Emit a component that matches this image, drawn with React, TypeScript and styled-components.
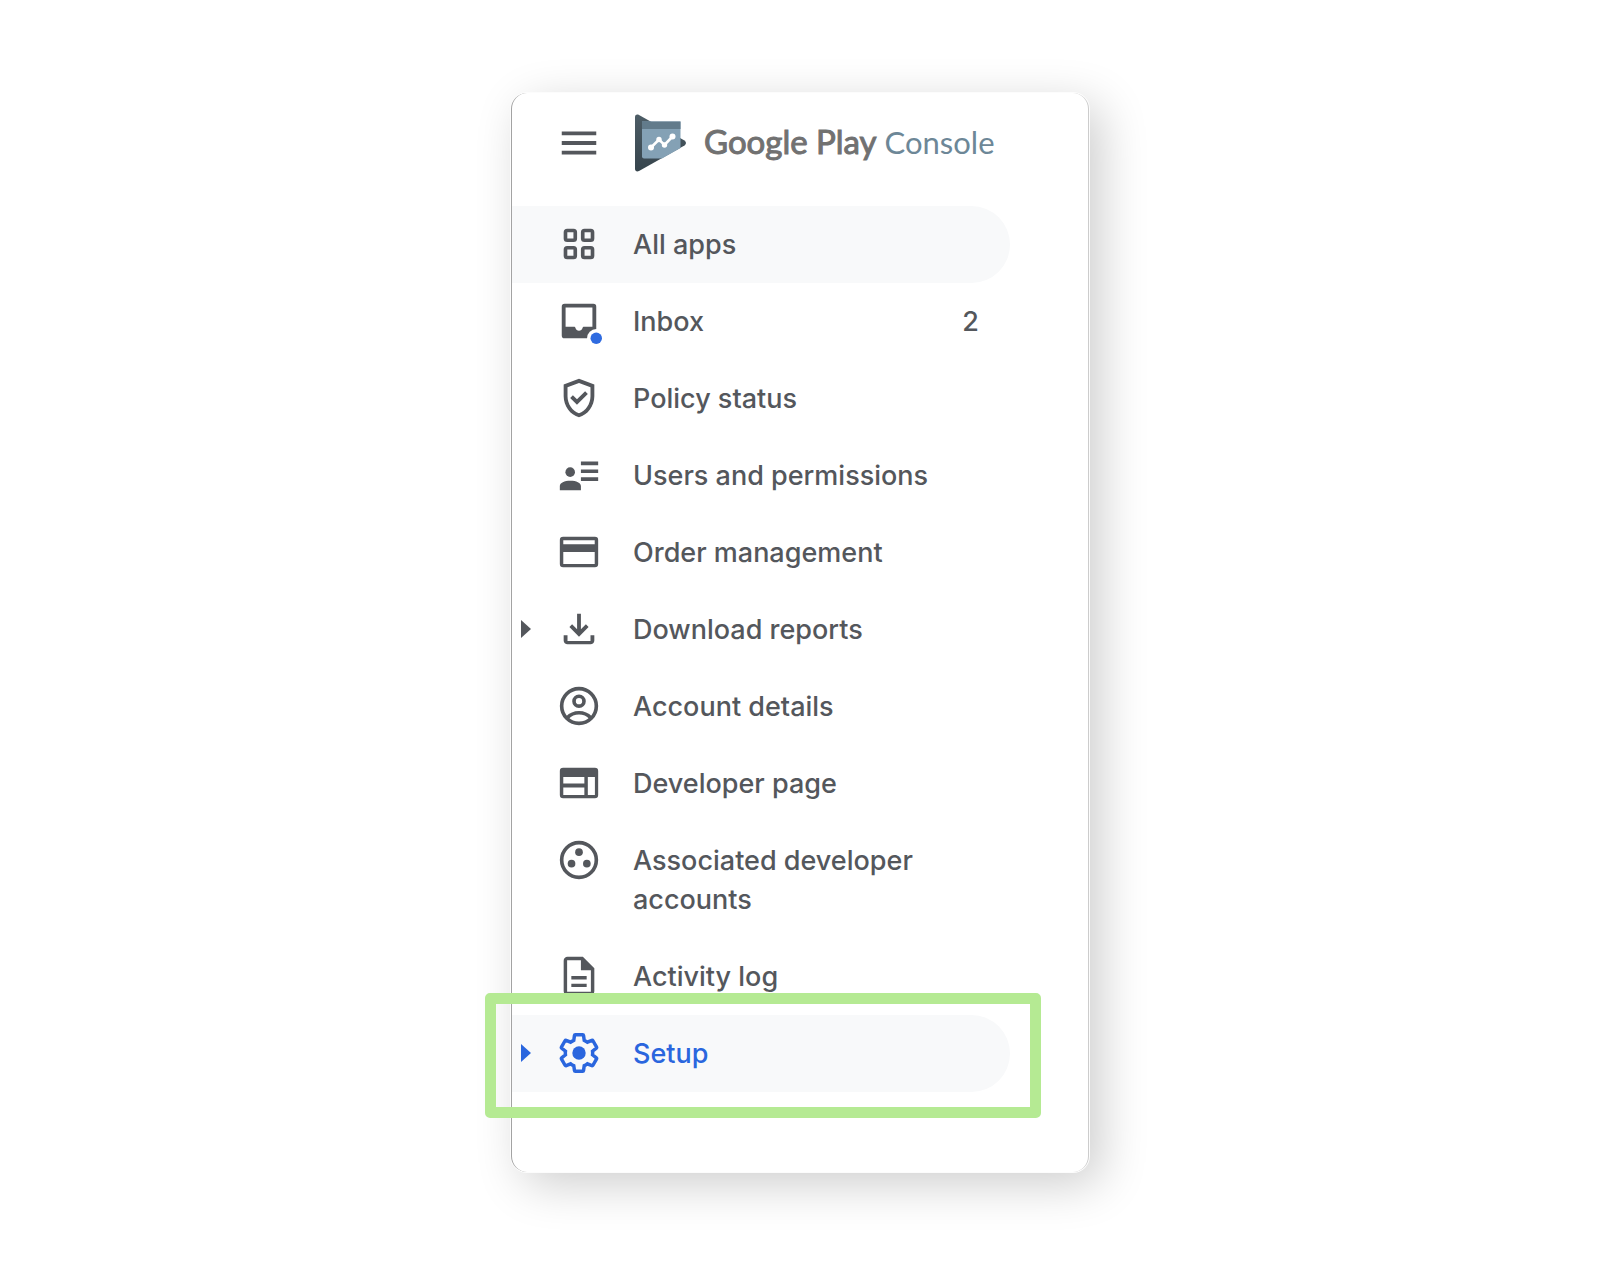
import React from "react";
import styled, { createGlobalStyle } from "styled-components";

const GREY = "#54575c";
const BLUE = "#2a66de";

const GlobalStyle = createGlobalStyle`
  *, *::before, *::after { box-sizing: border-box; }
  body {
    margin: 0;
    background: #ffffff;
    font-family: "Inter", "Liberation Sans", sans-serif;
  }
`;

const Page = styled.main`
  min-height: 100vh;
  display: flex;
  align-items: center;
  justify-content: center;
  padding: 32px;
`;

const Panel = styled.aside`
  width: 100%;
  max-width: 578px;
  padding-bottom: 80px;
  background: #ffffff;
  border-left: 1px solid #a3a3a3;
  border-right: 1px solid #cccccc;
  border-radius: 16px;
  box-shadow: 0 0 0 1px #fcfcfc, 12px 12px 48px rgba(0, 0, 0, 0.2);
`;

const Header = styled.header`
  display: flex;
  align-items: center;
  height: 113px;
  padding: 0 40px 14px 44px;
`;

const MenuButton = styled.button`
  display: flex;
  padding: 0;
  border: 0;
  background: none;
  color: ${GREY};
  cursor: pointer;
`;

const Brand = styled.a`
  display: flex;
  align-items: center;
  gap: 17px;
  margin-left: 33px;
  text-decoration: none;
`;

const BrandName = styled.span`
  display: flex;
  align-items: baseline;
  gap: 8px;
  padding-bottom: 3px;
  font-family: "Lato", "Open Sans", sans-serif;
  font-size: 33px;
  line-height: 40px;
  white-space: nowrap;
  color: #717171;
  -webkit-text-stroke: 1px #717171;
`;

const Product = styled.span`
  font-size: 31px;
  color: #6d8797;
  -webkit-text-stroke: 0;
`;

const List = styled.ul`
  list-style: none;
  margin: 0;
  padding: 0 78px 0 0;
`;

const Item = styled.li`
  position: relative;
`;

const ItemLink = styled.a<{ $filled?: boolean; $active?: boolean }>`
  display: flex;
  align-items: flex-start;
  padding: 19px 31px 19px 9px;
  border-radius: 0 39px 39px 0;
  background: ${(p) => (p.$filled ? "#f8f9fa" : "transparent")};
  color: ${(p) => (p.$active ? BLUE : GREY)};
  font-size: 27px;
  font-weight: 500;
  line-height: 39px;
  text-decoration: none;
`;

const ArrowSlot = styled.span`
  display: flex;
  align-items: center;
  width: 35px;
  height: 37px;
`;

const IconSlot = styled.span`
  display: flex;
  align-items: center;
  height: 37px;
  margin-right: 31px;
`;

const Label = styled.span`
  flex: 1;
`;

const Highlight = styled.span`
  position: absolute;
  inset: -22px -31px -26px -27px;
  border: 11px solid #b5ea93;
  border-radius: 5px;
  pointer-events: none;
`;

const Icon = ({ children }: { children: React.ReactNode }) => (
  <svg width="46" height="46" viewBox="0 0 24 24" fill="currentColor" aria-hidden="true">
    {children}
  </svg>
);

const Arrow = () => (
  <svg width="10" height="20" viewBox="0 0 10 20" fill="currentColor" aria-hidden="true">
    <path d="M0 1l10 9-10 9z" />
  </svg>
);

const Logo = () => (
  <svg width="52" height="58" viewBox="0 0 52 58" aria-hidden="true">
    <defs>
      <linearGradient id="tri" x1="0" y1="0" x2="0" y2="1">
        <stop offset="0" stopColor="#4d5d66" />
        <stop offset="1" stopColor="#36444c" />
      </linearGradient>
    </defs>
    <path
      d="M0 3C0 .8 2 0 4 1L49.500 26.500C51.500 27.800 51.500 30.200 49.500 31.500L4 57C2 58 0 57.200 0 55z"
      fill="url(#tri)"
    />
    <path d="M7 7.500h38.500v26.500L27 44.500H9a2 2 0 0 1-2-2z" fill="#84a1b5" />
    <path d="M7 7.500h38.500v7.500H7z" fill="#627b8b" />
    <path d="M16 33.500l8-8 5.500 5.500L37.500 22.500" fill="none" stroke="#fff" strokeWidth="2.600" />
    <g fill="#fff">
      <circle cx="16" cy="33.500" r="3" />
      <circle cx="24" cy="25.500" r="2.700" />
      <circle cx="29.500" cy="31" r="2.700" />
      <circle cx="37.500" cy="22.500" r="3" />
    </g>
  </svg>
);

const icons = {
  apps: (
    <g fill="none" stroke="currentColor" strokeWidth="1.900">
      <rect x="4.950" y="4.950" width="5.100" height="5.100" rx="0.900" />
      <rect x="13.950" y="4.950" width="5.100" height="5.100" rx="0.900" />
      <rect x="4.950" y="13.950" width="5.100" height="5.100" rx="0.900" />
      <rect x="13.950" y="13.950" width="5.100" height="5.100" rx="0.900" />
    </g>
  ),
  inbox: (
    <>
      <path
        fillRule="evenodd"
        d="M4.500 3h15A1.500 1.500 0 0 1 21 4.500v15a1.500 1.500 0 0 1-1.500 1.500h-15A1.500 1.500 0 0 1 3 19.500v-15A1.500 1.500 0 0 1 4.500 3zM5 5v10h4.600c.3 0 .4.200.5.500.3 1 1 1.600 1.900 1.600s1.600-.6 1.900-1.600c.1-.3.200-.5.500-.5H19V5z"
      />
      <circle cx="21" cy="21" r="4.800" fill="#fff" />
      <circle cx="21" cy="21" r="3" fill="#2f6be0" />
    </>
  ),
  policy: (
    <path d="M12 2 4 5v6.090c0 5.050 3.410 9.760 8 10.910 4.590-1.150 8-5.860 8-10.910V5l-8-3zm6 9.090c0 4-2.550 7.700-6 8.830-3.450-1.130-6-4.820-6-8.830v-4.700l6-2.250 6 2.250v4.700zm-9.180-.5L7.400 12l3.540 3.540 5.660-5.660-1.410-1.410-4.240 4.240-2.130-2.120z" />
  ),
  users: (
    <>
      <circle cx="7.400" cy="10.500" r="2.500" />
      <path d="M2 20v-2.200C2 16 4.400 15 7.500 15s5.500 1 5.500 2.800V20zM13 5h9v1.900h-9zM13 9.100h9v1.900h-9zM13 13.200h9v1.900h-9z" />
    </>
  ),
  orders: (
    <path
      fillRule="evenodd"
      d="M3.700 4h16.600A1.700 1.700 0 0 1 22 5.700v12.600a1.700 1.700 0 0 1-1.700 1.700H3.700A1.700 1.700 0 0 1 2 18.300V5.700A1.700 1.700 0 0 1 3.700 4zM3.800 5.900V8h16.400V5.900zM3.800 12v6.200h16.400V12z"
    />
  ),
  download: (
    <path d="M12 16l-5-5 1.400-1.450 2.600 2.600V4h2v8.150l2.600-2.600L17 11l-5 5zM6 20q-.825 0-1.412-.588T4 18v-2.700h2v2.900h12v-2.900h2V18q0 .825-.588 1.412T18 20z" />
  ),
  account: (
    <g fill="none" stroke="currentColor" strokeWidth="1.900">
      <circle cx="12" cy="12" r="9.050" />
      <circle cx="12" cy="9.500" r="2.600" />
      <path d="M5.900 18.100C7.600 16.300 9.600 15.500 12 15.500s4.400.8 6.100 2.600" />
    </g>
  ),
  page: (
    <path
      fillRule="evenodd"
      d="M3.700 4h16.600A1.700 1.700 0 0 1 22 5.700v12.600a1.700 1.700 0 0 1-1.700 1.700H3.700A1.700 1.700 0 0 1 2 18.300V5.700A1.700 1.700 0 0 1 3.700 4zM3.800 8.900v3.400h11V8.900zM3.800 14.300v3.900h11v-3.900zM16.600 8.900v9.300h3.700V8.900z"
    />
  ),
  associated: (
    <>
      <circle cx="12" cy="12" r="9.050" fill="none" stroke="currentColor" strokeWidth="1.900" />
      <circle cx="12" cy="7.900" r="2" />
      <circle cx="8.100" cy="13.900" r="2" />
      <circle cx="16.100" cy="13.900" r="2" />
    </>
  ),
  log: (
    <path d="M8 16h8v1.800H8zm0-4h8v1.800H8zm6-10H6c-1.100 0-2 .9-2 2v16c0 1.100.89 2 1.990 2H18c1.100 0 2-.9 2-2V8l-6-6zm4.200 18.200H5.800V3.800h7.200V9h5.200z" />
  ),
  setup: (
    <>
      <path
        fill="none"
        stroke="currentColor"
        strokeWidth="1.900"
        transform="translate(12 12) scale(0.950) translate(-12 -12)"
        d="M19.430 12.980c.04-.32.07-.64.07-.98 0-.34-.03-.66-.07-.98l2.110-1.650c.19-.15.24-.42.12-.64l-2-3.460c-.09-.16-.26-.25-.44-.25-.06 0-.12.01-.17.03l-2.490 1c-.52-.4-1.080-.73-1.690-.98l-.38-2.650C14.460 2.180 14.250 2 14 2h-4c-.25 0-.46.18-.49.42l-.38 2.650c-.61.25-1.170.59-1.690.98l-2.490-1c-.06-.02-.12-.03-.18-.03-.17 0-.34.09-.43.25l-2 3.460c-.13.22-.07.49.12.64l2.110 1.650c-.04.32-.07.65-.07.98 0 .33.03.66.07.98l-2.110 1.650c-.19.15-.24.42-.12.64l2 3.460c.09.16.26.25.44.25.06 0 .12-.01.17-.03l2.490-1c.52.4 1.080.73 1.690.98l.38 2.650c.03.24.24.42.49.42h4c.25 0 .46-.18.49-.42l.38-2.650c.61-.25 1.170-.59 1.690-.98l2.490 1c.06.02.12.03.18.03.17 0 .34-.09.43-.25l2-3.460c.12-.22.07-.49-.12-.64l-2.110-1.650z"
      />
      <circle cx="12" cy="12" r="3.500" />
    </>
  ),
};

type Entry = {
  icon: keyof typeof icons;
  label: string;
  count?: number;
  expandable?: boolean;
  filled?: boolean;
  active?: boolean;
};

const entries: Entry[] = [
  { icon: "apps", label: "All apps", filled: true },
  { icon: "inbox", label: "Inbox", count: 2 },
  { icon: "policy", label: "Policy status" },
  { icon: "users", label: "Users and permissions" },
  { icon: "orders", label: "Order management" },
  { icon: "download", label: "Download reports", expandable: true },
  { icon: "account", label: "Account details" },
  { icon: "page", label: "Developer page" },
  { icon: "associated", label: "Associated developer accounts" },
  { icon: "log", label: "Activity log" },
  { icon: "setup", label: "Setup", expandable: true, filled: true, active: true },
];

export default function App() {
  return (
    <>
      <GlobalStyle />
      <Page>
        <Panel>
          <Header>
            <MenuButton type="button" aria-label="Main menu">
              <Icon>
                <path d="M3 6h18v2H3zM3 11h18v2H3zM3 16h18v2H3z" />
              </Icon>
            </MenuButton>
            <Brand href="#home">
              <Logo />
              <BrandName>
                Google Play <Product>Console</Product>
              </BrandName>
            </Brand>
          </Header>
          <nav>
            <List>
              {entries.map((e) => (
                <Item key={e.icon}>
                  <ItemLink href={`#${e.icon}`} $filled={e.filled} $active={e.active}>
                    <ArrowSlot>{e.expandable && <Arrow />}</ArrowSlot>
                    <IconSlot>
                      <Icon>{icons[e.icon]}</Icon>
                    </IconSlot>
                    <Label>{e.label}</Label>
                    {e.count !== undefined && <span>{e.count}</span>}
                  </ItemLink>
                  {e.active && <Highlight />}
                </Item>
              ))}
            </List>
          </nav>
        </Panel>
      </Page>
    </>
  );
}
